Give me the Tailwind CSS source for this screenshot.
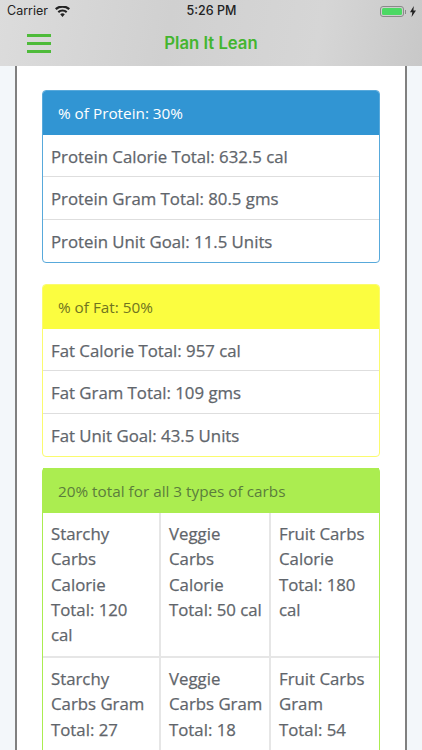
<!DOCTYPE html>
<html lang="en">
<head>
    <meta charset="UTF-8">
    <meta name="viewport" content="width=device-width, initial-scale=1.0">
    <title>Plan It Lean</title>
    <script src="https://cdn.jsdelivr.net/npm/@tailwindcss/browser@4"></script>
</head>
<body class="w-[422px] h-[750px] overflow-hidden bg-[#f3f7fa] font-['Open_Sans',sans-serif]">

    <!-- status bar + nav -->
    <header class="h-[66px] bg-[linear-gradient(100deg,#dcdcdc_0%,#d0d0d0_40%,#d6d6d6_75%,#c8c8c8_100%)] flex flex-col">
        <div class="h-[21px] mt-[1px] flex items-center justify-between pl-[7px] pr-[6px] font-['Inter',sans-serif] text-[12.5px] text-[#222]">
            <div class="flex items-center gap-[7px] w-[120px]">
                <span>Carrier</span>
                <svg width="15" height="11" viewBox="0 0 15 11" fill="#222">
                    <path d="M7.5 11 5.2 8.2a3.5 3.5 0 0 1 4.6 0zM4 6.9 2.6 5.2a7.500 7.500 0 0 1 9.800 0L11 6.900a5.400 5.400 0 0 0-7 0zM1.500 3.900 0 2.200a11.500 11.500 0 0 1 15 0l-1.500 1.700a9.300 9.300 0 0 0-12 0z"/>
                </svg>
            </div>
            <span class="font-medium">5:26 PM</span>
            <div class="flex items-center justify-end w-[120px]">
                <div class="w-[24px] h-[11px] rounded-[3px] border border-[#8a8a8a] p-[1px]">
                    <div class="w-full h-full rounded-[1.5px] bg-[#4cd964]"></div>
                </div>
                <div class="w-[1px] h-[4px] bg-[#8a8a8a] ml-[1px] mr-[4px]"></div>
                <svg width="6" height="11" viewBox="0 0 6 11" fill="#222"><path d="M3.800 0 0 6.200h2.300L1.600 11 6 4.400H3.400z"/></svg>
            </div>
        </div>
        <div class="relative flex-1 flex items-center justify-center">
            <div class="absolute left-[27px] top-[12px] w-[24px] flex flex-col gap-[5px]">
                <div class="h-[3px] bg-[#4ebb3a]"></div>
                <div class="h-[3px] bg-[#4ebb3a]"></div>
                <div class="h-[3px] bg-[#4ebb3a]"></div>
            </div>
            <span class="font-['Inter',sans-serif] font-semibold text-[16.7px] text-[#43b52f]">Plan It Lean</span>
        </div>
    </header>

    <!-- page -->
    <main class="mx-[15px] h-[684px] overflow-hidden bg-white border-x-2 border-[#808080] px-[25px] pt-[24px] flex flex-col gap-[21px] text-[16.8px] font-medium [-webkit-text-stroke:0.25px_#5f656b] text-[#5f656b]">

        <section class="shrink-0 h-[173px] rounded-[4px] border border-[#58a9db] overflow-hidden">
            <h2 class="h-[45px] -mt-px bg-[#3195d3] text-white text-[15.300px] font-normal [-webkit-text-stroke:0] pl-[15px] pt-[2px] flex items-center">% of Protein: 30%</h2>
            <p class="h-[42.300px] pl-[8px] pt-[2px] flex items-center border-b border-[#dedede]">Protein Calorie Total: 632.5 cal</p>
            <p class="h-[42.300px] pl-[8px] pt-[2px] flex items-center border-b border-[#dedede]">Protein Gram Total: 80.5 gms</p>
            <p class="h-[42.300px] pl-[8px] pt-[2px] flex items-center">Protein Unit Goal: 11.5 Units</p>
        </section>

        <section class="shrink-0 h-[173px] rounded-[4px] border border-[#fbfb6e] overflow-hidden">
            <h2 class="h-[45px] -mt-px bg-[#fbfd40] text-[#70741f] text-[15.300px] font-normal [-webkit-text-stroke:0] pl-[15px] pt-[2px] flex items-center">% of Fat: 50%</h2>
            <p class="h-[42.300px] pl-[8px] pt-[2px] flex items-center border-b border-[#dedede]">Fat Calorie Total: 957 cal</p>
            <p class="h-[42.300px] pl-[8px] pt-[2px] flex items-center border-b border-[#dedede]">Fat Gram Total: 109 gms</p>
            <p class="h-[42.300px] pl-[8px] pt-[2px] flex items-center">Fat Unit Goal: 43.5 Units</p>
        </section>

        <section class="shrink-0 -mt-[10px] rounded-t-[4px] border-x border-t border-[#abec50]">
            <h2 class="h-[45px] -mt-px bg-[#abed50] text-[#5b7d3c] text-[15.300px] font-normal [-webkit-text-stroke:0] pl-[15px] pt-[2px] flex items-center">20% total for all 3 types of carbs</h2>
            <div class="grid grid-cols-[118px_110px_1fr] leading-[25.300px]">
                <div class="h-[145px] pl-[8px] pr-[8px] pt-[8px] border-r-2 border-b-2 border-[#e6e6e6]">Starchy Carbs Calorie Total: 120 cal</div>
                <div class="h-[145px] pl-[8px] pr-[4px] pt-[8px] border-r-2 border-b-2 border-[#e6e6e6]">Veggie Carbs Calorie Total: 50 cal</div>
                <div class="h-[145px] pl-[8px] pr-[11px] pt-[8px] border-b-2 border-[#e6e6e6]">Fruit Carbs Calorie Total: 180 cal</div>
                <div class="h-[100px] pl-[8px] pr-[8px] pt-[8px] border-r-2 border-[#e6e6e6]">Starchy Carbs Gram Total: 27</div>
                <div class="h-[100px] pl-[8px] pt-[8px] border-r-2 border-[#e6e6e6]">Veggie Carbs Gram Total: 18</div>
                <div class="h-[100px] pl-[8px] pr-[11px] pt-[8px]">Fruit Carbs Gram Total: 54</div>
            </div>
        </section>
    </main>
</body>
</html>
